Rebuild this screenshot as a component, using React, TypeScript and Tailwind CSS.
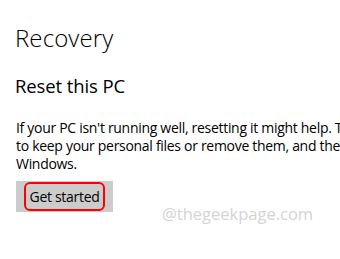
export default function App() {
  return (
    <div className="w-[340px] h-[259px] bg-white overflow-hidden relative text-black" style={{ fontFamily: '"Open Sans", "Noto Sans", sans-serif' }}>
      <div className="pl-[15px] pt-[22px]">
        <h1 className="text-[24px] leading-[32px] font-light tracking-[0.1px]">Recovery</h1>
        <h2 className="mt-[19px] text-[18.5px] leading-[26px] font-normal tracking-[-0.1px]">Reset this PC</h2>
        <p className="mt-[20px] ml-[1px] text-[14px] leading-[18px] whitespace-nowrap tracking-[-0.3px]">
          If your PC isn't running well, resetting it might help. T<br />
          to keep your personal files or remove them, and then<br />
          Windows.
        </p>
        <div className="mt-[8px] ml-[1px] w-[97px] h-[31px] bg-[#cccccc] flex items-center justify-center">
          <div className="w-[81px] h-[29px] border-2 border-[#ff0000] rounded-[6px] flex items-center justify-center text-[14px] tracking-[-0.3px]">
            Get started
          </div>
        </div>
      </div>
      <div className="absolute left-[162px] top-[202px] text-[16.5px] text-[#d4d4d4]">@thegeekpage.com</div>
    </div>
  );
}
